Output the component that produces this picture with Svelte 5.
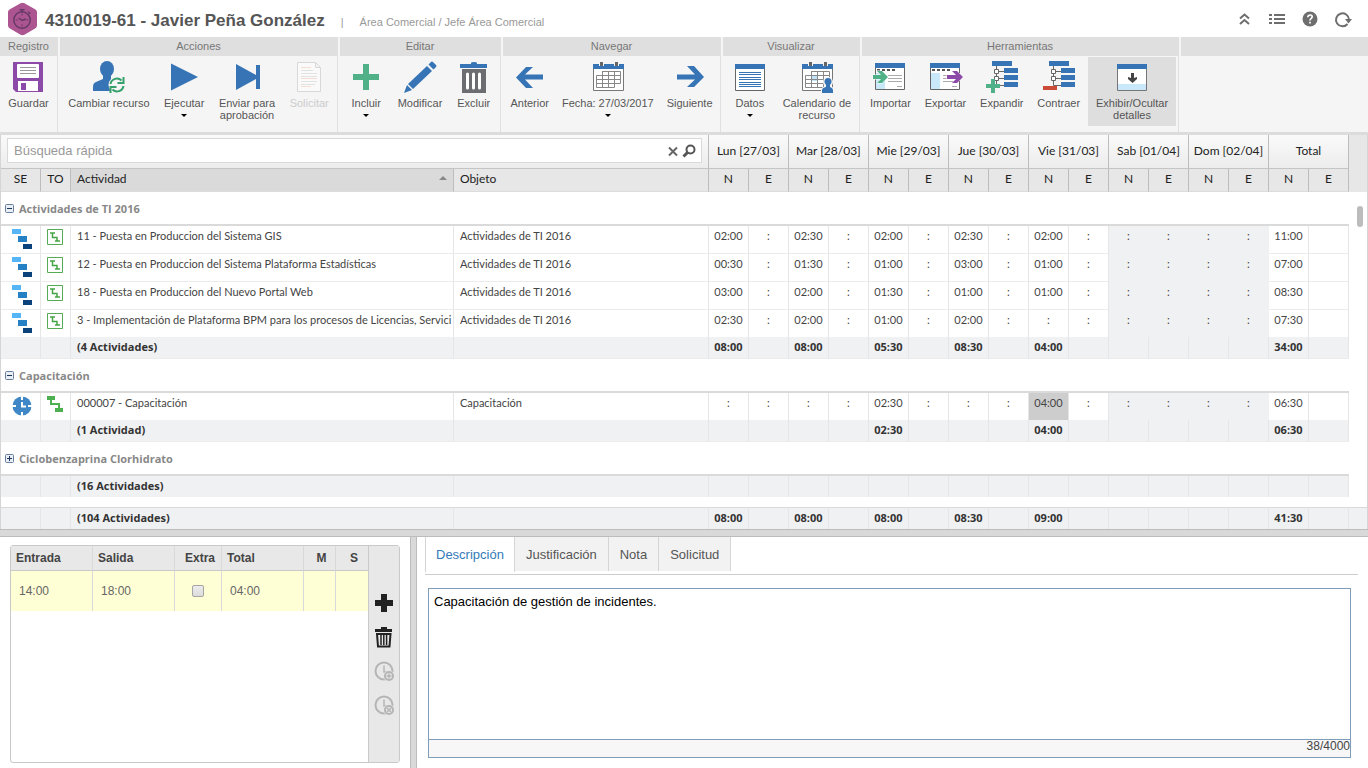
<script lang="ts">
  type Tool = {
    icon: string;
    lines: string[];
    menu?: boolean;
    disabled?: boolean;
    active?: boolean;
  };

  type Activity = {
    kind: string;
    name: string;
    object: string;
    times: string[];
  };

  type Group = {
    name: string;
    open: boolean;
    rows: Activity[];
    summary: string;
    totals: string[];
  };

  const ribbon: { title: string; width: number; tools: Tool[] }[] = [
    { title: 'Registro', width: 58, tools: [{ icon: 'save', lines: ['Guardar'] }] },
    {
      title: 'Acciones',
      width: 278,
      tools: [
        { icon: 'user', lines: ['Cambiar recurso'] },
        { icon: 'play', lines: ['Ejecutar'], menu: true },
        { icon: 'next', lines: ['Enviar para', 'aprobación'] },
        { icon: 'document', lines: ['Solicitar'], disabled: true },
      ],
    },
    {
      title: 'Editar',
      width: 161,
      tools: [
        { icon: 'plus', lines: ['Incluir'], menu: true },
        { icon: 'pencil', lines: ['Modificar'] },
        { icon: 'trash', lines: ['Excluir'] },
      ],
    },
    {
      title: 'Navegar',
      width: 218,
      tools: [
        { icon: 'left', lines: ['Anterior'] },
        { icon: 'calendar', lines: ['Fecha: 27/03/2017'], menu: true },
        { icon: 'right', lines: ['Siguiente'] },
      ],
    },
    {
      title: 'Visualizar',
      width: 137,
      tools: [
        { icon: 'data', lines: ['Datos'], menu: true },
        { icon: 'usercalendar', lines: ['Calendario de', 'recurso'] },
      ],
    },
    {
      title: 'Herramientas',
      width: 317,
      tools: [
        { icon: 'import', lines: ['Importar'] },
        { icon: 'export', lines: ['Exportar'] },
        { icon: 'expand', lines: ['Expandir'] },
        { icon: 'collapse', lines: ['Contraer'] },
        { icon: 'details', lines: ['Exhibir/Ocultar', 'detalles'], active: true },
      ],
    },
  ];

  const days = [
    'Lun [27/03]',
    'Mar [28/03]',
    'Mie [29/03]',
    'Jue [30/03]',
    'Vie [31/03]',
    'Sab [01/04]',
    'Dom [02/04]',
    'Total',
  ];

  // One value per N column; E columns only ever hold the empty mark.
  const groups: Group[] = [
    {
      name: 'Actividades de TI 2016',
      open: true,
      rows: [
        {
          kind: 'project',
          name: '11 - Puesta en Produccion del Sistema GIS',
          object: 'Actividades de TI 2016',
          times: ['02:00', '02:30', '02:00', '02:30', '02:00', ':', ':', '11:00'],
        },
        {
          kind: 'project',
          name: '12 - Puesta en Produccion del Sistema Plataforma Estadísticas',
          object: 'Actividades de TI 2016',
          times: ['00:30', '01:30', '01:00', '03:00', '01:00', ':', ':', '07:00'],
        },
        {
          kind: 'project',
          name: '18 - Puesta en Produccion del Nuevo Portal Web',
          object: 'Actividades de TI 2016',
          times: ['03:00', '02:00', '01:30', '01:00', '01:00', ':', ':', '08:30'],
        },
        {
          kind: 'project',
          name: '3 - Implementación de Plataforma BPM para los procesos de Licencias, Servici',
          object: 'Actividades de TI 2016',
          times: ['02:30', '02:00', '01:00', '02:00', ':', ':', ':', '07:30'],
        },
      ],
      summary: '(4 Actividades)',
      totals: ['08:00', '08:00', '05:30', '08:30', '04:00', '', '', '34:00'],
    },
    {
      name: 'Capacitación',
      open: true,
      rows: [
        {
          kind: 'training',
          name: '000007 - Capacitación',
          object: 'Capacitación',
          times: [':', ':', '02:30', ':', '04:00', ':', ':', '06:30'],
        },
      ],
      summary: '(1 Actividad)',
      totals: ['', '', '02:30', '', '04:00', '', '', '06:30'],
    },
    {
      name: 'Ciclobenzaprina Clorhidrato',
      open: false,
      rows: [],
      summary: '(16 Actividades)',
      totals: ['', '', '', '', '', '', '', ''],
    },
  ];

  const grandTotals = ['08:00', '08:00', '08:00', '08:30', '09:00', '', '', '41:30'];
  const tabs = ['Descripción', 'Justificación', 'Nota', 'Solicitud'];

  let activeTab = $state('Descripción');
  let search = $state('');
  let extra = $state(false);
  let description = $state('Capacitación de gestión de incidentes.');
</script>

{#snippet toolIcon(name: string)}
  <svg class="tool__icon" viewBox="0 0 32 32" aria-hidden="true">
    {#if name === 'save'}
      <path d="M1 1h30v30H4l-3-3z" fill="#8b4aa7" />
      <rect x="5" y="3" width="22" height="14" rx="1" fill="#fff" />
      <path d="M8 6.500h16M8 9.500h16M8 12.500h16" stroke="#999" />
      <path d="M6 20h20v10H6z" fill="#fff" />
      <path d="M9 22h5v7H9z" fill="#8b4aa7" />
    {:else if name === 'user'}
      <ellipse cx="14" cy="8" rx="7" ry="8" fill="#3674b5" />
      <path d="M10 14v4l-7 3q-3 1-3 5v4h26v-4q0-4-3-5l-5-3v-4z" fill="#3674b5" />
      <circle cx="24" cy="24" r="8.500" fill="#f5f5f5" />
      <path d="M17.500 23a6.500 6.500 0 0 1 11-3.500M30.500 25a6.500 6.500 0 0 1-11 3.500" fill="none" stroke="#35a06b" stroke-width="2" />
      <path d="M30.500 16v6h-6M17.500 32v-6h6" fill="none" stroke="#35a06b" stroke-width="2" />
    {:else if name === 'play'}
      <path d="M3 2.500 30 16 3 29.500z" fill="#3674b5" />
    {:else if name === 'next'}
      <path d="M5 3l20 11V4h4v24h-4V18L5 29z" fill="#3674b5" />
    {:else if name === 'document'}
      <path d="M4.500 1.500h18l5 5v24h-23zM22.500 1.500v5h5" fill="#fafafa" stroke="#d8d8d8" />
      <path d="M8 6.500h10M8 17.500h16M8 25.500h10" stroke="#f6ddd2" />
      <path d="M8 9.500h12M8 12.500h16M8 15.500h16M8 20.500h16M8 23.500h14" stroke="#e2e2e2" />
    {:else if name === 'plus'}
      <path d="M13 3h6v10h10v6H19v10h-6V19H3v-6h10z" fill="#50b088" />
    {:else if name === 'pencil'}
      <path d="M23 5l5 5L9 28l-5-5z" fill="#3674b5" />
      <path d="M24.500 3.500 27 1q1-1 2.500.5L32 4q1 1 0 2l-2.500 2.500zM3 24l5 5-8 3z" fill="#3674b5" />
    {:else if name === 'trash'}
      <path d="M2 3h11V2q0-1 3-1t3 1v1h10v4H2z" fill="#3674b5" />
      <path d="M4 8h24v24H4z" fill="#6c6d70" />
      <path d="M9.500 13v14M15.500 13v14M21.500 13v14" stroke="#fff" stroke-width="3" stroke-linecap="round" />
    {:else if name === 'left'}
      <path d="M12 6h7l-8 7.500h18v5H11l8 8.500h-7L2 16.500z" fill="#3674b5" />
    {:else if name === 'right'}
      <path d="M20 5h-7l8 8.500H3v5h18L13 26h7l10-10z" fill="#3674b5" />
    {:else if name === 'calendar' || name === 'usercalendar'}
      <path d="M1.500 3.500h30v26h-30z" fill="#fff" stroke="#777" />
      <path d="M1 3h31v5H1z" fill="#3674b5" />
      <path d="M7 0h5v5H7zM22 0h5v5h-5z" fill="#f5f5f5" />
      <path d="M8 1h3v4H8zM23 1h3v4h-3z" fill="#666" />
      {#if name === 'usercalendar'}
        <path d="M11 15h6v5h-6z" fill="#bfe3f7" />
      {/if}
      <path d="M10.500 10.500h18v12h-6v4h-18v-12h24M4.500 18.500h24M4.500 22.500h20M10.500 10v16M16.500 10v16M22.500 10v16" fill="none" stroke="#888" />
      {#if name === 'usercalendar'}
        <circle cx="27" cy="21" r="5" fill="#f5f5f5" />
        <path d="M20 33v-4q0-3 5-4h4q4 1 4 4v4z" fill="#f5f5f5" />
        <circle cx="27" cy="20.500" r="3.500" fill="#3674b5" />
        <path d="M21 32v-3q0-2 4-3v-3h4v3q3 1 3 3v3z" fill="#3674b5" />
      {/if}
    {:else if name === 'data'}
      <path d="M1.500 3.500h29v26h-29z" fill="#fff" stroke="#666" />
      <path d="M1 3h30v5H1z" fill="#3674b5" />
      <path d="M5 11.500h22M5 13.500h22M5 16.500h22M5 18.500h22M5 21.500h22M5 23.500h22M5 25.500h22" stroke="#3674b5" />
    {:else if name === 'import' || name === 'export'}
      <path d="M1.500 2.500h29v26h-29z" fill="#fff" stroke="#666" />
      <path d="M1 2h30v5H1z" fill="#3674b5" />
      <path d="M2 12h9v16H2z" fill="#c9e8fa" />
      <path d="M3 9h18" stroke="#555" stroke-width="2" stroke-dasharray="3 2" />
      <path d="M14 14.500h14M14 17.500h14M14 20.500h14M23 25.500h5" stroke="#aaa" />
      {#if name === 'import'}
        <path d="M-1 14h8l-4-4h5l6 6-6 6H3l4-4h-8z" fill="#50b088" stroke="#fff" stroke-width="1" paint-order="stroke" />
      {:else}
        <path d="M18 14h9l-4-4h5l6 6-6 6h-5l4-4h-9z" fill="#8b4aa7" stroke="#fff" stroke-width="1" paint-order="stroke" />
      {/if}
    {:else if name === 'expand' || name === 'collapse'}
      <path d="M10.500 5v19.500H18M12 10.500h6M12 17.500h6" fill="none" stroke="#666" />
      <path d="M8.500 8.500h4v4h-4zM8.500 15.500h4v4h-4z" fill="#fff" stroke="#666" />
      <path d="M6 0h20v5H6zM18 7h14v5H18zM18 14h14v5H18zM18 21h14v5H18z" fill="#3674b5" />
      {#if name === 'expand'}
        <path d="M5 18h4v5h5v4H9v5H5v-5H0v-4h5z" fill="#50b088" />
      {:else}
        <path d="M0 25h14v4H0z" fill="#cc4b38" />
      {/if}
    {:else if name === 'details'}
      <path d="M1.500 3.500h29v26h-29z" fill="#fff" stroke="#777" />
      <path d="M1 3h30v5H1z" fill="#3674b5" />
      <path d="M2 23h28v6H2z" fill="#c9e8fa" />
      <path d="M15 12h3v5l3-1v2l-4.500 4-4.500-4v-2l3 1z" fill="#444" />
    {/if}
  </svg>
{/snippet}

{#snippet summaryRow(label: string, totals: string[], className: string)}
  <tr class={className}>
    <td></td>
    <td></td>
    <td>{label}</td>
    <td></td>
    {#each totals as total}
      <td class="time">{total}</td>
      <td class="time"></td>
    {/each}
    <td class="gutter"></td>
  </tr>
{/snippet}

<div class="app">
  <header class="title">
    <svg class="title__logo" viewBox="0 0 30 34" aria-hidden="true">
      <path d="M13 .8q2-1 4 0l11 6q2 1 2 3v14q0 2-2 3l-11 6.500q-2 1-4 0l-11-6.500q-2-1-2-3v-14q0-2 2-3z" fill="#ad5590" />
      <g fill="none" stroke="#633967" stroke-width="1.500">
        <circle cx="14.500" cy="18" r="8.500" />
        <path d="M12 7.500h5M14.500 8v2M21 9.500l2 2M11 16l3.500 2.500 4-1.500" />
        <path d="M14.500 11.500v2M14.500 22.500v2M8 18h2M19 18h2" stroke-width="1" />
      </g>
    </svg>
    <h1>4310019-61 - Javier Peña González</h1>
    <span class="title__divider">|</span>
    <span class="title__area">Área Comercial / Jefe Área Comercial</span>
    <div class="title__actions">
      <button aria-label="Ocultar barra">
        <svg viewBox="0 0 18 18"><path d="M5 8.500 9.500 4.500 14 8.500M5 14 9.500 10 14 14" fill="none" stroke="#6e6e6e" stroke-width="2" /></svg>
      </button>
      <button aria-label="Lista">
        <svg viewBox="0 0 18 18"><path d="M1 5h3M1 9h3M1 13h3M6 5h11M6 9h11M6 13h11" stroke="#6e6e6e" stroke-width="2" /></svg>
      </button>
      <button aria-label="Ayuda">
        <svg viewBox="0 0 18 18">
          <circle cx="9" cy="9" r="7.500" fill="#6e6e6e" />
          <path d="M6.800 7.300Q7 5 9.200 5q2 0 2 1.800 0 1-1.200 1.800Q9 9.300 9 10.500M9 11.700v1.800" fill="none" stroke="#fff" stroke-width="1.700" />
        </svg>
      </button>
      <button aria-label="Actualizar">
        <svg viewBox="0 0 18 18">
          <path d="M13.500 14A6.500 6.500 0 1 1 15 9.500" fill="none" stroke="#6e6e6e" stroke-width="2" />
          <path d="M11 9h7l-3.500 4.500z" fill="#6e6e6e" />
        </svg>
      </button>
    </div>
  </header>

  <nav class="ribbon" aria-label="Herramientas">
    {#each ribbon as section}
      <section class="ribbon__group" style:flex-basis="{section.width}px">
        <h2>{section.title}</h2>
        <div class="ribbon__tools">
          {#each section.tools as tool}
            <button class="tool" class:tool--active={tool.active} disabled={tool.disabled}>
              {@render toolIcon(tool.icon)}
              {#each tool.lines as line}
                <span>{line}</span>
              {/each}
              {#if tool.menu}
                <i class="tool__caret"></i>
              {/if}
            </button>
          {/each}
        </div>
      </section>
    {/each}
    <div class="ribbon__group ribbon__rest"><h2></h2></div>
  </nav>

  <main class="activities">
    <table>
      <colgroup>
        <col class="col-se" />
        <col class="col-to" />
        <col />
        <col class="col-object" />
        {#each days as _}
          <col class="col-time" />
          <col class="col-time" />
        {/each}
        <col class="col-gutter" />
      </colgroup>
      <thead>
        <tr class="days">
          <th colspan="4">
            <div class="search">
              <input type="text" placeholder="Búsqueda rápida" aria-label="Búsqueda rápida" bind:value={search} />
              <button aria-label="Limpiar" onclick={() => (search = '')}>
                <svg viewBox="0 0 14 14"><path d="M3 3.500l8 8M11 3.500l-8 8" stroke="#666" stroke-width="2" /></svg>
              </button>
              <button aria-label="Buscar">
                <svg viewBox="0 0 14 14">
                  <circle cx="8.500" cy="5.500" r="4" fill="none" stroke="#555" stroke-width="2" />
                  <path d="M6 8l-4.500 4.500" stroke="#555" stroke-width="3" />
                </svg>
              </button>
            </div>
          </th>
          {#each days as day}
            <th colspan="2">{day}</th>
          {/each}
          <th class="gutter"></th>
        </tr>
        <tr class="columns">
          <th>SE</th>
          <th>TO</th>
          <th class="sorted" aria-sort="ascending"><div>Actividad<i></i></div></th>
          <th class="left">Objeto</th>
          {#each days as _}
            <th>N</th>
            <th>E</th>
          {/each}
          <th class="gutter"></th>
        </tr>
      </thead>
      {#each groups as group}
        <tbody>
          <tr class="group">
            <th colspan="20">
              <button aria-expanded={group.open}>
                <svg viewBox="0 0 9 9" aria-hidden="true">
                  <rect x=".5" y=".5" width="8" height="8" rx="1" fill="#e9eef5" stroke="#67809f" />
                  <path d={group.open ? 'M2 4.500h5' : 'M2 4.500h5M4.500 2v5'} stroke="#1d3557" />
                </svg>
                {group.name}
              </button>
            </th>
            <th class="gutter"></th>
          </tr>
          {#each group.rows as row, index}
            <tr class="activity" class:activity--last={index === group.rows.length - 1}>
              <td class="symbol">
                <svg viewBox="0 0 20 20" aria-hidden="true">
                  {#if row.kind === 'project'}
                    <path d="M0 0h9v5H0z" fill="#55b5f7" />
                    <path d="M6 7h9v6H6z" fill="#2680c4" />
                    <path d="M11 15h9v5h-9z" fill="#0a427c" />
                  {:else}
                    <circle cx="10" cy="10" r="9.500" fill="#3f87c6" />
                    <path d="M10 0v4M10 16v4M0 10h4M16 10h4M10 6v4.500h4" fill="none" stroke="#fff" stroke-width="2" />
                  {/if}
                </svg>
              </td>
              <td class="symbol symbol--small">
                <svg viewBox="0 0 16 16" aria-hidden="true">
                  {#if row.kind === 'project'}
                    <path d="M.5.5h15v15H.5z" fill="none" stroke="#55aa55" />
                    <path d="M3 4h5M5.500 4v4.500H10V12M8 12h5" fill="none" stroke="#45a545" stroke-width="1.500" />
                  {:else}
                    <path d="M0 0h8v4H0zM8 12h8v4H8z" fill="#4caf50" />
                    <path d="M4 4v4h8v4" fill="none" stroke="#4caf50" stroke-width="2" />
                  {/if}
                </svg>
              </td>
              <td>{row.name}</td>
              <td>{row.object}</td>
              {#each row.times as time, day}
                <td class="time" class:weekend={day === 5 || day === 6} class:selected={row.kind === 'training' && day === 4}>{time}</td>
                <td class="time" class:weekend={day === 5 || day === 6}>{day < 7 ? ':' : ''}</td>
              {/each}
              <td class="gutter"></td>
            </tr>
          {/each}
          {@render summaryRow(group.summary, group.totals, group.open ? 'summary' : 'summary summary--closed')}
        </tbody>
      {/each}
      <tfoot>
        <tr class="spacer"><td colspan="21"></td></tr>
        {@render summaryRow('(104 Actividades)', grandTotals, 'summary summary--all')}
      </tfoot>
    </table>
    <div class="activities__thumb"></div>
  </main>

  <div class="splitter"></div>

  <div class="details">
    <section class="entries">
      <div class="entries__list">
        <table>
          <colgroup>
            <col class="col-hour" />
            <col class="col-hour" />
            <col class="col-extra" />
            <col class="col-hour" />
            <col class="col-flag" />
            <col class="col-flag" />
          </colgroup>
          <thead>
            <tr>
              <th>Entrada</th>
              <th>Salida</th>
              <th class="center">Extra</th>
              <th>Total</th>
              <th class="center">M</th>
              <th class="center">S</th>
            </tr>
          </thead>
          <tbody>
            <tr>
              <td>14:00</td>
              <td>18:00</td>
              <td class="center"><input type="checkbox" aria-label="Extra" bind:checked={extra} /></td>
              <td>04:00</td>
              <td></td>
              <td></td>
            </tr>
          </tbody>
        </table>
      </div>
      <div class="entries__actions">
        <button aria-label="Agregar">
          <svg viewBox="0 0 20 20"><path d="M7 1h6v6h6v6h-6v6H7v-6H1V7h6z" fill="#222" /></svg>
        </button>
        <button aria-label="Eliminar">
          <svg viewBox="0 0 20 20">
            <path d="M1 2h6V0h6v2h5v3H1z" fill="#222" />
            <path d="M3 7h13.500l-1 12.500H4z" fill="none" stroke="#222" stroke-width="2" />
            <path d="M7 8v10M9.800 8v10M12.600 8v10" stroke="#222" stroke-width="1.500" />
          </svg>
        </button>
        {#each ['Agregar horario', 'Eliminar horario'] as label, i}
          <button aria-label={label} disabled>
            <svg viewBox="0 0 20 20">
              <circle cx="10" cy="10" r="8.500" fill="none" stroke="#b5b5b5" stroke-width="2" />
              <path d="M10 4.500V11h3" fill="none" stroke="#b5b5b5" stroke-width="1.500" />
              <circle cx="15" cy="15" r="5.500" fill="#e8e8e8" />
              <circle cx="15" cy="15" r="4" fill="#e8e8e8" stroke="#b5b5b5" stroke-width="2" />
              <path d={i === 0 ? 'M15 12.500v5M12.500 15h5' : 'M13 13l4 4M17 13l-4 4'} stroke="#b5b5b5" stroke-width="1.500" />
            </svg>
          </button>
        {/each}
      </div>
    </section>

    <div class="splitter splitter--vertical"></div>

    <section class="notes">
      <div class="tabs" role="tablist">
        {#each tabs as tab}
          <button role="tab" aria-selected={tab === activeTab} onclick={() => (activeTab = tab)}>{tab}</button>
        {/each}
      </div>
      <div class="editor">
        <textarea aria-label={activeTab} maxlength="4000" bind:value={description}></textarea>
        <p>{description.length}/4000</p>
      </div>
    </section>
  </div>
</div>

<style>
  :global(body) {
    margin: 0;
    background: #fff;
  }

  .app,
  .app * {
    box-sizing: border-box;
  }

  .app {
    display: flex;
    flex-direction: column;
    min-height: 100vh;
    font-family: 'Liberation Sans', Arial, sans-serif;
    font-size: 12px;
    color: #444;
  }

  button {
    border: 0;
    padding: 0;
    background: none;
    font: inherit;
    color: inherit;
  }

  h1,
  h2,
  p {
    margin: 0;
  }

  svg {
    display: block;
    overflow: visible;
  }

  /* title bar */
  .title {
    display: flex;
    align-items: center;
    height: 37px;
    padding: 0 16px 0 8px;
  }

  .title__logo {
    width: 29px;
    height: 34px;
    margin-right: 8px;
  }

  h1 {
    font-size: 17px;
    line-height: 20px;
    padding-top: 4px;
    color: #555;
  }

  .title__divider,
  .title__area {
    padding-top: 6px;
    font-size: 11px;
    color: #999;
  }

  .title__divider {
    margin: 0 16px;
  }

  .title__actions {
    display: flex;
    gap: 15px;
    margin-left: auto;
  }

  .title__actions svg {
    width: 18px;
    height: 18px;
  }

  /* ribbon */
  .ribbon {
    display: flex;
    gap: 2px;
    background: #f5f5f5;
    border-bottom: 3px solid #dcdcdc;
    font-size: 11px;
  }

  .ribbon__group {
    flex: none;
    border-right: 1px solid #e0e0e0;
  }

  .ribbon__rest {
    flex: 1;
    border-right: 0;
  }

  h2 {
    height: 19px;
    font-size: 11px;
    font-weight: normal;
    line-height: 19px;
    text-align: center;
    color: #777;
    background: #dfdfdf;
  }

  .ribbon__tools {
    display: flex;
    justify-content: space-around;
    padding: 1px 1px 6px;
  }

  .tool {
    display: flex;
    flex-direction: column;
    align-items: center;
    min-width: 50px;
    min-height: 69px;
    padding: 4px 6px;
    line-height: 12px;
    color: #555;
  }

  .tool--active {
    padding: 4px 8px;
    background: #dedede;
  }

  .tool:disabled {
    color: #ccc;
  }

  .tool__icon {
    width: 32px;
    height: 32px;
    margin-bottom: 4px;
  }

  .tool__caret {
    margin-top: 5px;
    border: 3px solid transparent;
    border-top-color: #000;
    border-bottom: 0;
  }

  /* activity grid */
  .activities {
    position: relative;
    border: 1px solid #d5d5d5;
    border-width: 0 1px;
    font-family: Lato, 'Open Sans', sans-serif;
    font-size: 11px;
  }

  table {
    width: 100%;
    table-layout: fixed;
    border-collapse: separate;
    border-spacing: 0;
  }

  .col-se {
    width: 40px;
  }

  .col-to {
    width: 30px;
  }

  .col-object {
    width: 255px;
  }

  .col-time {
    width: 40px;
  }

  .col-gutter {
    width: 18px;
  }

  .activities th,
  .activities td {
    padding: 0;
    overflow: hidden;
    white-space: nowrap;
  }

  .activities thead th {
    padding-bottom: 2px;
    border-right: 1px solid #bdbdbd;
    font-size: 12px;
    font-weight: normal;
    color: #222;
  }

  .days th {
    height: 34px;
    border-bottom: 1px solid #c4c4c4;
    background: linear-gradient(#fafafa, #ececec);
  }

  .columns th {
    height: 23px;
    border-bottom: 1px solid #dcdcdc;
    background: #e7e7e7;
  }

  .activities .columns th {
    padding-bottom: 4px;
  }

  .activities .columns th.left {
    padding-left: 6px;
    text-align: left;
  }

  .activities .columns th.sorted {
    padding: 0 6px 4px;
    background: #dadada;
  }

  .sorted div {
    display: flex;
    align-items: center;
    justify-content: space-between;
  }

  .sorted i {
    border: 4px solid transparent;
    border-top: 0;
    border-bottom-color: #888;
  }

  .activities thead th.gutter {
    border-right: 0;
    border-bottom-color: #e7e7e7;
    background: #e7e7e7;
  }

  .search {
    display: flex;
    align-items: center;
    gap: 2px;
    height: 25px;
    margin: 0 6px;
    padding: 0 5px 0 6px;
    border: 1px solid #d9d9d9;
    background: #fff;
  }

  .search input {
    flex: 1;
    min-width: 0;
    border: 0;
    padding: 0;
    outline: 0;
    font: 13px 'Liberation Sans', Arial, sans-serif;
  }

  .search input::placeholder {
    color: #999;
  }

  .search svg {
    width: 14px;
    height: 14px;
  }

  .group th {
    height: 34px;
    border-bottom: 2px solid #dadada;
    text-align: left;
  }

  .group th.gutter {
    border-bottom: 0;
  }

  .group button {
    display: flex;
    align-items: center;
    gap: 5px;
    height: 32px;
    padding: 1px 4px 0;
    font-family: 'Open Sans', 'Noto Sans', sans-serif;
    font-weight: bold;
    color: #888;
  }

  .group svg {
    width: 9px;
    height: 9px;
  }

  .activities td {
    line-height: 20px;
    vertical-align: top;
    border-right: 1px solid #e6e6e6;
  }

  .activities td:nth-child(3),
  .activities td:nth-child(4) {
    padding-left: 6px;
  }

  .activity td {
    height: 28px;
    border-bottom: 1px solid #ececec;
  }

  .activity--last td {
    height: 27px;
    border-bottom: 0;
  }

  .activities td.symbol {
    padding: 3px 8px 0 11px;
  }

  .symbol svg {
    width: 20px;
    height: 20px;
  }

  .activities td.symbol--small {
    padding: 3px 6px 0;
  }

  .symbol--small svg {
    width: 16px;
    height: 16px;
  }

  .time {
    text-align: center;
  }

  .activities td.weekend {
    border-color: #f0f1f2;
    background: #f0f1f2;
  }

  .activities td.selected {
    background: #cdcdcd;
  }

  .summary td {
    height: 22px;
    border-bottom: 1px solid #ececec;
    background: #f0f1f2;
    font-family: 'Open Sans', 'Noto Sans', sans-serif;
    font-weight: bold;
    color: #333;
  }

  .summary--closed td {
    height: 21px;
    border-bottom: 0;
  }

  .activities td.gutter {
    border: 0;
    background: none;
  }

  .spacer td {
    height: 10px;
    border: 0;
  }

  .summary--all td {
    border-top: 1px solid #d9d9d9;
    border-bottom: 0;
  }

  .activities .summary--all td.gutter {
    border-top: 1px solid #d9d9d9;
    background: #f0f1f2;
  }

  .activities__thumb {
    position: absolute;
    top: 71px;
    right: 4px;
    width: 6px;
    height: 21px;
    border-radius: 3px;
    background: #bcbcbc;
  }

  /* splitters */
  .splitter {
    flex: none;
    height: 8px;
    border: 1px solid #bcbcbc;
    border-width: 1px 0;
    background: #d9d9d9;
  }

  .splitter--vertical {
    width: 7px;
    height: auto;
    border-width: 0 1px;
  }

  /* bottom panes */
  .details {
    display: flex;
    flex: 1;
  }

  .entries {
    display: flex;
    flex: none;
    width: 390px;
    margin: 8px 10px 5px;
    border: 1px solid #c9c9c9;
    border-radius: 3px;
  }

  .entries__list {
    flex: 1;
  }

  .col-extra {
    width: 47px;
  }

  .col-flag {
    width: 32px;
  }

  .entries th,
  .entries td {
    padding: 0 5px;
    border-right: 1px solid #d9d9d9;
    text-align: left;
  }

  .entries th:last-child,
  .entries td:last-child {
    border-right: 0;
  }

  .entries th {
    height: 25px;
    border-bottom: 1px solid #c9c9c9;
    background: #e8e8e8;
  }

  .entries td {
    height: 40px;
    padding: 0 8px;
    background: #ffffd6;
    color: #666;
  }

  .entries .center {
    text-align: center;
  }

  .entries th.center {
    padding: 0 3px 0 7px;
  }

  .entries input {
    appearance: none;
    display: block;
    width: 12px;
    height: 12px;
    margin: 0 auto;
    border: 1px solid #a5a5a5;
    border-radius: 2px;
    background: linear-gradient(#ececec, #dcdcdc);
  }

  .entries input:checked {
    background: #666;
  }

  .entries__actions {
    display: flex;
    flex-direction: column;
    align-items: center;
    gap: 14px;
    width: 31px;
    padding-top: 47px;
    border-left: 1px solid #c9c9c9;
    background: #e8e8e8;
  }

  .entries__actions svg {
    width: 20px;
    height: 20px;
  }

  .notes {
    display: flex;
    flex: 1;
    flex-direction: column;
    min-width: 0;
    padding: 0 10px 10px 8px;
  }

  .tabs {
    display: flex;
    align-items: flex-start;
    height: 38px;
    border-bottom: 1px solid #ccc;
    font-size: 13px;
  }

  .tabs button {
    height: 34px;
    padding: 0 11px;
    border-right: 1px solid #d5d5d5;
    background: #f2f2f2;
    color: #555;
  }

  .tabs button[aria-selected='true'] {
    height: 35px;
    padding: 0 10px;
    border-left: 1px solid #d5d5d5;
    background: #fff;
    color: #337ab7;
  }

  .editor {
    display: flex;
    flex: 1;
    flex-direction: column;
    margin: 13px 7px 0 3px;
    border: 1px solid #7f9db9;
  }

  textarea {
    flex: 1;
    padding: 5px;
    border: 0;
    outline: 0;
    resize: none;
    font: 13px 'Liberation Sans', Arial, sans-serif;
    line-height: 16px;
    color: #000;
  }

  .editor p {
    height: 18px;
    border-top: 1px solid #7f9db9;
    background: #f7f7f7;
    line-height: 12px;
    text-align: right;
  }
</style>
